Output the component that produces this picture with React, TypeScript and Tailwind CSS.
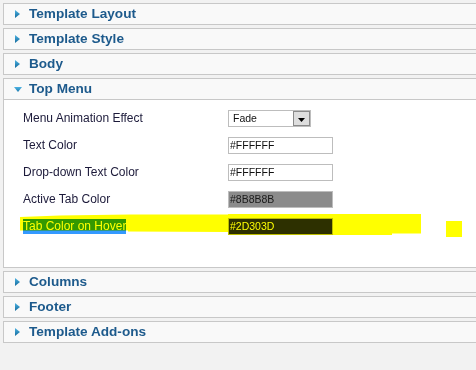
import React from "react";

const FONT = "font-['Liberation_Sans',Arial,sans-serif]";

function RightArrow() {
    return (
        <svg width="5" height="8" viewBox="0 0 5 8" className="block">
            <defs>
                <linearGradient id="ra" x1="0" y1="0" x2="0" y2="1">
                    <stop offset="0" stopColor="#4db3e3" />
                    <stop offset="1" stopColor="#146a9c" />
                </linearGradient>
            </defs>
            <polygon points="0,0 5,4 0,8" fill="url(#ra)" />
        </svg>
    );
}

function DownArrow() {
    return (
        <svg width="8" height="5" viewBox="0 0 8 5" className="block">
            <defs>
                <linearGradient id="da" x1="0" y1="0" x2="0" y2="1">
                    <stop offset="0" stopColor="#4db3e3" />
                    <stop offset="1" stopColor="#1a78ad" />
                </linearGradient>
            </defs>
            <polygon points="0,0 8,0 4,5" fill="url(#da)" />
        </svg>
    );
}

function Section({ title }: { title: string }) {
    return (
        <div className="h-[22px] shrink-0 border border-r-0 border-[#c8c8c8] bg-[#f9f9f9] flex items-center pl-[11px]">
            <RightArrow />
            <span className="ml-[9px] text-[13.6px] font-bold text-[#1d5a8c] leading-none">{title}</span>
        </div>
    );
}

function TextBox({ value, bg = "bg-white", color = "text-[#111]" }: { value: string; bg?: string; color?: string }) {
    return (
        <div className={`w-[105px] h-[17px] border border-[#bdbdbd] ${bg} ${color} text-[10.5px] leading-[15px] pl-px`}>
            {value}
        </div>
    );
}

export default function App() {
    const rows = [
        { label: "Text Color", value: "#FFFFFF" },
        { label: "Drop-down Text Color", value: "#FFFFFF" },
    ];

    return (
        <div className={`${FONT} relative w-[476px] h-[370px] overflow-hidden bg-[#f2f2f2] pt-[3px] pl-[3px] flex flex-col gap-[3px]`}>
            <Section title="Template Layout" />
            <Section title="Template Style" />
            <Section title="Body" />

            {/* TOP MENU (open) */}
            <div className="shrink-0 border border-r-0 border-[#c8c8c8]">
                <div className="h-[21px] border-b border-[#c8c8c8] bg-[#f9f9f9] flex items-center pl-[10px]">
                    <DownArrow />
                    <span className="ml-[7px] text-[13.6px] font-bold text-[#1d5a8c] leading-none">Top Menu</span>
                </div>
                <div className="bg-white h-[167px] pt-[10px] pl-[19px] flex flex-col gap-[10px] text-[12px] text-[#1c1a3a]">
                    <div className="h-[17px] flex items-center">
                        <span className="w-[205px] -mt-[2px]">Menu Animation Effect</span>
                        <div className="w-[83px] h-[17px] border border-[#bdbdbd] bg-white flex items-center justify-between">
                            <span className="pl-[4px] text-[10.5px] text-[#111]">Fade</span>
                            <div className="w-[17px] h-[15px] border border-[#8a8a8a] bg-[#dedede] flex items-center justify-center">
                                <svg width="7" height="4" viewBox="0 0 7 4" className="block mt-[3px]">
                                    <polygon points="0,0 7,0 3.5,4" fill="#000" />
                                </svg>
                            </div>
                        </div>
                    </div>
                    {rows.map((r) => (
                        <div key={r.label} className="h-[17px] flex items-center">
                            <span className="w-[205px] -mt-[2px]">{r.label}</span>
                            <TextBox value={r.value} />
                        </div>
                    ))}
                    <div className="h-[17px] flex items-center">
                        <span className="w-[205px] -mt-[2px]">Active Tab Color</span>
                        <TextBox value="#8B8B8B" bg="bg-[#8b8b8b]" color="text-[#1a1a1a]" />
                    </div>
                    <div className="h-[17px] flex items-start">
                        <div className="w-[205px] -mt-px">
                            <span className="inline-block bg-[#3399ff] text-white leading-[15px]">Tab Color on Hover</span>
                        </div>
                        <TextBox value="#2D303D" bg="bg-[#2d303d]" color="text-white" />
                    </div>
                </div>
            </div>

            <Section title="Columns" />
            <Section title="Footer" />
            <Section title="Template Add-ons" />

            {/* highlighter marks over the hover row */}
            <svg
                className="absolute left-0 top-0 pointer-events-none mix-blend-multiply"
                width="476"
                height="370"
                viewBox="0 0 476 370"
            >
                <polygon
                    points="20,217 60,215.5 130,214.5 228,214.5 228,214 421,214 421,233.5 392,233.5 392,235 228,235 228,232 128,231.5 128,230.5 20,230.5"
                    fill="#ffff00"
                />
                <rect x="446" y="221" width="16" height="16" fill="#ffff00" />
            </svg>
        </div>
    );
}
